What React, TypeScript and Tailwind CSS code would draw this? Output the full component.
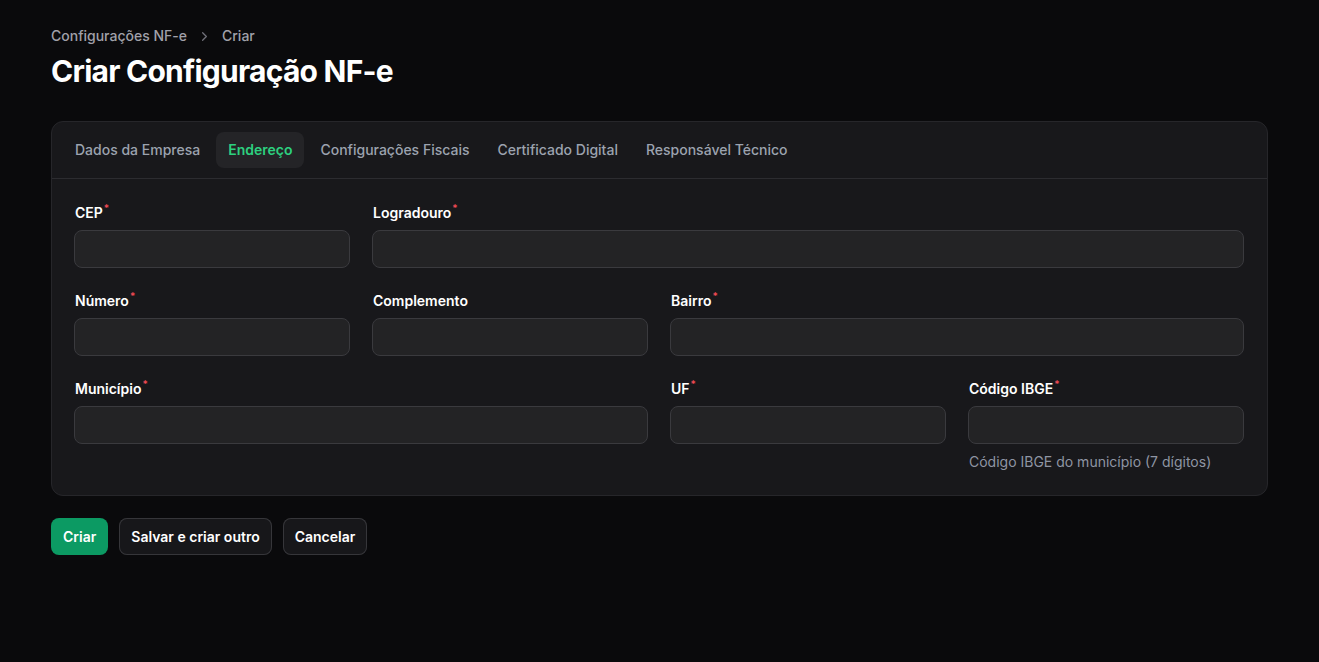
import React from 'react';
import { ChevronRight } from 'lucide-react';

const tabs = ['Dados da Empresa', 'Endereço', 'Configurações Fiscais', 'Certificado Digital', 'Responsável Técnico'];

type FieldProps = {
  label: string;
  required?: boolean;
  hint?: string;
  className?: string;
};

const Field = ({ label, required, hint, className = '' }: FieldProps) => (
  <div className={`flex flex-col ${className}`}>
    <label className="flex items-start h-5 mb-[7px] text-sm font-semibold text-white leading-5 pl-px">
      {label}
      {required && <span className="text-[#f04a55] text-[10px] leading-3 ml-px -mt-px">*</span>}
    </label>
    <input
      type="text"
      className="h-[38px] w-full rounded-lg border border-[#3a3a3e] bg-[#232325] px-3 text-sm text-white outline-none"
    />
    {hint && <p className="mt-2 text-sm text-[#8f95a3] pl-px leading-5">{hint}</p>}
  </div>
);

export default function App() {
  return (
    <div
      className="min-h-screen w-full bg-[#0a0a0c] text-white"
      style={{ fontFamily: 'Inter, "Noto Sans", sans-serif' }}
    >
      <div className="px-[51px] pt-[26px]">
        {/* Breadcrumb */}
        <nav className="flex items-center gap-[10px] text-sm font-medium text-[#a1a1aa] leading-5">
          <span>Configurações NF-e</span>
          <ChevronRight size={15} className="text-[#71717a]" strokeWidth={2} />
          <span>Criar</span>
        </nav>

        <h1 className="mt-[7px] text-[30px] leading-9 font-bold tracking-tight text-white">Criar Configuração NF-e</h1>

        {/* Form card */}
        <div className="mt-[32px] rounded-xl border border-[#26262a] bg-[#18181b]">
          <div className="flex items-center gap-1 border-b border-[#2c2c30] px-[11px] h-[57px]">
            {tabs.map((t) => (
              <button
                key={t}
                className={`h-9 px-3 rounded-lg text-sm font-medium ${
                  t === 'Endereço' ? 'bg-[#242427] text-[#2dd07f] font-semibold' : 'text-[#9ca3af]'
                }`}
              >
                {t}
              </button>
            ))}
          </div>

          <div className="pl-[22px] pr-[23px] pt-[24px] pb-[23px] grid grid-cols-4 gap-x-[22px] gap-y-[23px]">
            <Field label="CEP" required />
            <Field label="Logradouro" required className="col-span-3" />
            <Field label="Número" required />
            <Field label="Complemento" />
            <Field label="Bairro" required className="col-span-2" />
            <Field label="Município" required className="col-span-2" />
            <Field label="UF" required />
            <Field label="Código IBGE" required hint="Código IBGE do município (7 dígitos)" />
          </div>
        </div>

        {/* Actions */}
        <div className="mt-[22px] flex items-center gap-[11px]">
          <button className="h-[37px] px-3 rounded-lg bg-[#0c9a63] text-sm font-semibold text-white">Criar</button>
          <button className="h-[37px] px-3 rounded-lg ring-1 ring-inset ring-[#36363a] bg-[#17171a] text-sm font-semibold text-white">
            Salvar e criar outro
          </button>
          <button className="h-[37px] px-3 rounded-lg ring-1 ring-inset ring-[#36363a] bg-[#17171a] text-sm font-semibold text-white">
            Cancelar
          </button>
        </div>
      </div>
    </div>
  );
}
